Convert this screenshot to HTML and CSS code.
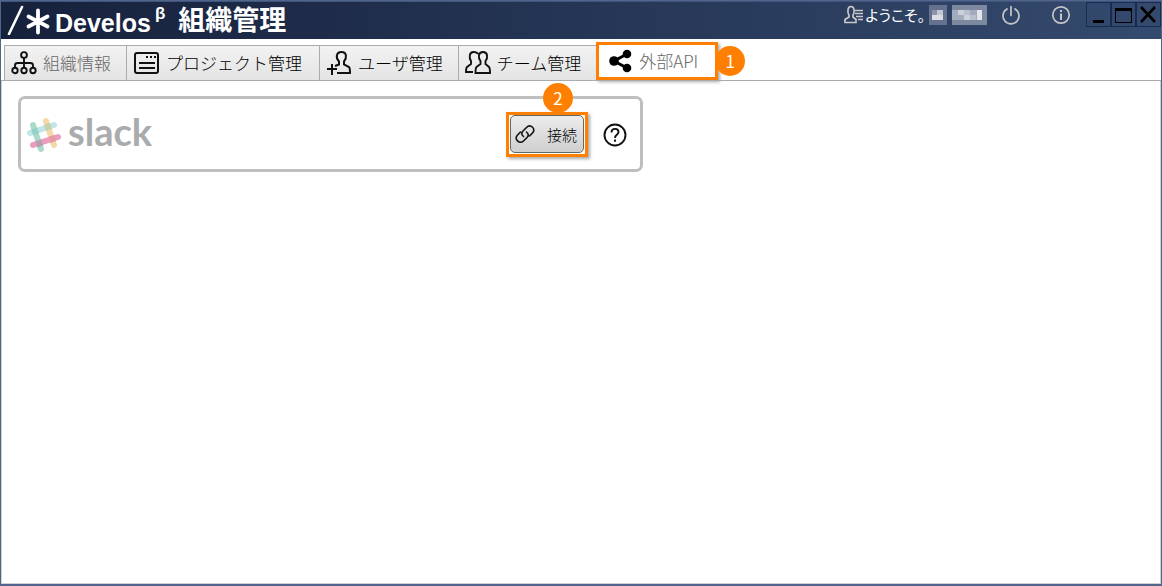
FILE: index.html
```html
<!DOCTYPE html>
<html lang="ja">
<head>
<meta charset="utf-8">
<title>Develos 組織管理</title>
<link rel="stylesheet" href="styles.css">
</head>
<body>
<div class="window">
  <header class="titlebar">
    <div class="brand">
      <svg class="brand-mark" width="44" height="30" viewBox="0 0 44 30" fill="none" stroke="#fff" stroke-linecap="round" aria-hidden="true">
        <path d="M2 29 15 2" stroke-width="2.600"/>
        <path d="M31 5.500v22M21.500 11.500l19 10M40.500 11.500l-19 10" stroke-width="3.800"/>
      </svg>
      <span class="brand-name">Develos</span><sup class="brand-beta">β</sup>
      <h1 class="page-title">組織管理</h1>
    </div>
    <div class="account">
      <svg class="account-icon" width="19" height="19" viewBox="0 0 19 19" fill="none" stroke="#c8c8c8" stroke-width="1.700" aria-hidden="true">
        <path d="M1 17.500v-3l4-2.500V10C3.500 8 3 1.500 7 1.500S10.500 8 9 10v2l3 2.500v3zM11 5.500h8M11 8.500h8M12 11.500h7M14 14.500h5"/>
      </svg>
      <span class="welcome">ようこそ。</span>
      <svg class="mask" width="18" height="20" viewBox="0 0 18 20" aria-hidden="true"><path fill="#64728f" d="M0 0h18v20H0z"/><path fill="#8b96ac" d="M3 5h11v10H3z"/><path fill="#dcdee6" d="M3 10h11v5H3z"/><path fill="#c3c8d4" d="M8 5h6v5H8z"/></svg>
      <svg class="mask mask-long" width="35" height="20" viewBox="0 0 35 20" aria-hidden="true"><path fill="#7d899f" d="M0 0h35v20H0z"/><path fill="#a3acbd" d="M0 5h30v10H0z"/><path fill="#ccd0db" d="M6 5h6v5H6zM12 10h6v5h-6z"/><path fill="#e3e5ec" d="M25 5h5v10h-5z"/><path fill="#b9bfcc" d="M12 5h6v5h-6zM18 10h6v5h-6z"/></svg>
      <button class="icon-button power" aria-label="ログアウト">
        <svg width="20" height="20" viewBox="0 0 20 20" fill="none" stroke="#c6c6c6" stroke-width="1.700" stroke-linecap="round"><path d="M10 1.500v9M6 4a8 8 0 1 0 8 0"/></svg>
      </button>
      <button class="icon-button info" aria-label="情報">
        <svg width="20" height="20" viewBox="0 0 20 20" fill="none" stroke="#c6c6c6" stroke-width="1.700"><circle cx="10" cy="10" r="8.200"/><path d="M10 8.500V15M10 5v2" stroke-width="2"/></svg>
      </button>
      <div class="window-controls">
        <button class="window-button" aria-label="最小化"><svg width="22" height="22" viewBox="0 0 22 22"><path d="M6 16h11v3H6z"/></svg></button>
        <button class="window-button" aria-label="最大化"><svg width="22" height="22" viewBox="0 0 22 22"><path fill-rule="evenodd" d="M3 4h17v15H3zM4 7v11h15V7z"/></svg></button>
        <button class="window-button" aria-label="閉じる"><svg width="22" height="22" viewBox="0 0 22 22" fill="none" stroke="#000" stroke-width="2.600"><path d="m4 3 14 15M18 3 4 18"/></svg></button>
      </div>
    </div>
  </header>

  <nav class="tabs" role="tablist">
    <button class="tab" role="tab">
      <svg width="26" height="26" viewBox="0 0 26 26" fill="none" stroke="#111" stroke-width="1.900" aria-hidden="true"><circle cx="13" cy="5" r="2.900"/><circle cx="4" cy="20.500" r="2.700"/><circle cx="13" cy="20.500" r="2.700"/><circle cx="22" cy="20.500" r="2.700"/><path d="M13 8v10M4 18v-2.500q0-2.500 2.500-2.500h13q2.500 0 2.500 2.500V18"/></svg>
      <span class="faint">組織情報</span>
    </button>
    <button class="tab" role="tab">
      <svg width="26" height="26" viewBox="0 0 26 26" fill="none" stroke="#111" stroke-width="2" aria-hidden="true"><rect x="1" y="3" width="23" height="20" rx="2"/><path d="M5 13h16M5 18h16"/><path d="M12 7h2M16 7h2M20 7h2"/></svg>
      <span>プロジェクト管理</span>
    </button>
    <button class="tab" role="tab">
      <svg width="26" height="26" viewBox="0 0 26 26" fill="none" stroke="#111" stroke-width="2" aria-hidden="true"><path d="M9 16l4-1.500v-3C9.500 8 10 2 15.500 2S21 8 18 11.500v3l5 2.500q1 1 1 6H11M1 19h10M6 14v11"/></svg>
      <span>ユーザ管理</span>
    </button>
    <button class="tab" role="tab">
      <svg width="26" height="26" viewBox="0 0 26 26" fill="none" stroke="#111" stroke-width="1.900" aria-hidden="true"><path d="M13 4C12 2 10 2 8.500 2 4 2 4 8 6 11v3l-4 3q-1 1-1 5h7M18 2c-5 0-5 6-2.500 9v3l-4 3q-1 1-1 6H25q0-5-1-6l-3.500-3v-3C23 8 23 2 18 2z"/></svg>
      <span>チーム管理</span>
    </button>
    <button class="tab selected" role="tab" aria-selected="true">
      <svg width="26" height="26" viewBox="0 0 26 26" aria-hidden="true"><path d="M20 6 7 13l13 7" fill="none" stroke="#000" stroke-width="3"/><circle cx="7" cy="13" r="4.800"/><circle cx="20" cy="6" r="4.300"/><circle cx="20" cy="20" r="4.300"/></svg>
      <span class="faint">外部API</span>
      <span class="marker marker-side">1</span>
    </button>
  </nav>

  <main class="content">
    <section class="service">
      <div class="slack">
        <svg width="36" height="36" viewBox="0 0 36 36" fill="none" stroke-width="6" stroke-linecap="round" aria-hidden="true">
          <path d="M4 16 28 8" stroke="#c1e6ea"/>
          <path d="m20 4 8 24" stroke="#f3d9a9"/>
          <path d="m7 8 8 24" stroke="#a9dcc8"/>
          <path d="m7 28 25-8" stroke="#eb9dbd"/>
          <g stroke-linecap="butt">
            <path d="m21 7 2 6" stroke="#c6d2a8"/>
            <path d="m8.200 11.500 2 6" stroke="#97d0c8"/>
            <path d="m12.300 23.500 2 6" stroke="#b8a0b4"/>
            <path d="m25.300 19 2 6" stroke="#e69ca2"/>
          </g>
        </svg>
        <span class="slack-name">slack</span>
      </div>
      <div class="highlight">
        <button class="connect">
          <svg width="20" height="20" viewBox="0 0 20 20" fill="none" stroke="#111" stroke-width="1.600" stroke-linecap="round" aria-hidden="true"><path d="M8.500 12.500C6 10.500 6.500 8.500 8 7l3.500-3.500c4-4 10 1.500 6 5.500l-3 3M11.500 8c2.500 2 2 4 .5 5.500L8.500 17c-4 3.500-10-2-6-6l3-3"/></svg>
          <span>接続</span>
        </button>
        <span class="marker marker-top">2</span>
      </div>
      <button class="icon-button help" aria-label="ヘルプ">
        <svg width="24" height="24" viewBox="0 0 24 24" fill="none" stroke="#111" stroke-width="1.900"><circle cx="12" cy="12" r="10.500"/><path d="M8.500 9.500c0-5 7-4.500 7-.5 0 3-3.500 2.500-3.500 6M12 16.500v2.200"/></svg>
      </button>
    </section>
  </main>
</div>
</body>
</html>
```
FILE: styles.css
```css
* { box-sizing: border-box; }

body {
  margin: 0;
  font-family: "Liberation Sans", "Noto Sans CJK JP", sans-serif;
  color: #000;
}

button {
  margin: 0;
  padding: 0;
  border: 0;
  background: none;
  font: inherit;
  color: inherit;
}

svg { display: block; flex: none; }

.window {
  display: flex;
  flex-direction: column;
  min-height: 100vh;
  border: 1px solid #50648c;
  border-bottom-width: 2px;
  background: #fff;
}

.titlebar {
  display: flex;
  justify-content: space-between;
  align-items: flex-start;
  height: 38px;
  color: #fff;
  background: linear-gradient(90deg, #16213c, #344a6e);
  border-top: 1px solid #40557c;
}

.brand {
  display: flex;
  align-items: center;
  height: 36px;
  padding-left: 6px;
}

.brand-name {
  margin-left: 4px;
  padding-top: 6px;
  font-size: 25px;
  font-weight: 700;
  line-height: 30px;
}

.brand-beta {
  align-self: flex-start;
  margin-left: 4px;
  font-size: 17px;
  font-weight: 700;
  line-height: 24px;
}

.page-title {
  margin: 0;
  padding: 2px 0 0 13px;
  font-size: 27px;
  font-weight: 700;
  line-height: 34px;
}

.account { display: flex; align-items: center; }
.account-icon { margin-right: 2px; }

.welcome {
  font-family: "Noto Sans CJK JP", sans-serif;
  font-size: 15px;
  font-weight: 400;
  font-feature-settings: "palt";
  line-height: 24px;
}

.mask { margin-left: 4px; }
.mask-long { margin-left: 5px; }
.power { margin-left: 14px; }
.info { margin-left: 30px; }

.window-controls {
  display: flex;
  margin-left: 15px;
}

.window-button {
  width: 25px;
  height: 25px;
  border: 1px solid #192b50;
}

.tabs {
  display: flex;
  height: 42px;
  padding: 6px 3px 0;
  border-bottom: 1px solid #ababab;
}

.tab {
  display: flex;
  align-items: center;
  gap: 6px;
  padding: 0 15px 0 6px;
  border: 1px solid #ababab;
  border-right: 0;
  border-bottom: 0;
  background: linear-gradient(#f2f2f2, #e4e4e4);
  font-family: "Noto Sans CJK JP", sans-serif;
  font-size: 17px;
  font-weight: 300;
  line-height: 24px;
  white-space: nowrap;
}

.tab:nth-child(2) { padding-left: 7px; padding-right: 17px; }
.faint { color: #666; }

.tab.selected {
  position: relative;
  margin: -3px 0 0;
  padding: 0 17px 0 8px;
  border: 3px solid #ff8000;
  background: #fff;
  box-shadow: 2px 2px 3px #aaa;
}

.marker {
  position: absolute;
  width: 30px;
  height: 30px;
  border-radius: 50%;
  background: #ff8000;
  color: #fff;
  font-family: "Noto Sans CJK JP", sans-serif;
  font-size: 17px;
  font-weight: 400;
  line-height: 29px;
  text-align: center;
}

.marker-side { left: 100%; top: 1px; }
.marker-top { left: 34px; top: -32px; }

.content {
  flex: 1;
  padding: 15px 16px;
  border: 1px solid #d0d0d0;
  border-top: 0;
}

.service {
  display: flex;
  align-items: center;
  max-width: 625px;
  height: 76px;
  padding: 1px 13px 0 5px;
  border: 3px solid #bfbfbf;
  border-radius: 7px;
}

.slack {
  display: flex;
  align-items: center;
  flex: 1;
  gap: 6px;
}

.slack-name {
  color: #a9abad;
  font-family: Lato, sans-serif;
  font-size: 38px;
  font-weight: 700;
  line-height: 40px;
  padding-bottom: 7px;
}

.highlight {
  position: relative;
  border: 3px solid #ff8000;
  box-shadow: 2px 2px 3px #aaa;
}

.connect {
  display: flex;
  align-items: center;
  justify-content: space-between;
  width: 74px;
  height: 38px;
  margin: 0 1px 1px;
  padding: 0 6px 0 4px;
  border: 1px solid #666;
  border-radius: 5px;
  background: linear-gradient(#ececec, #cfcfcf);
  font-family: "Noto Sans CJK JP", sans-serif;
  font-size: 15px;
  font-weight: 300;
}

.help { margin-left: 15px; }
```
